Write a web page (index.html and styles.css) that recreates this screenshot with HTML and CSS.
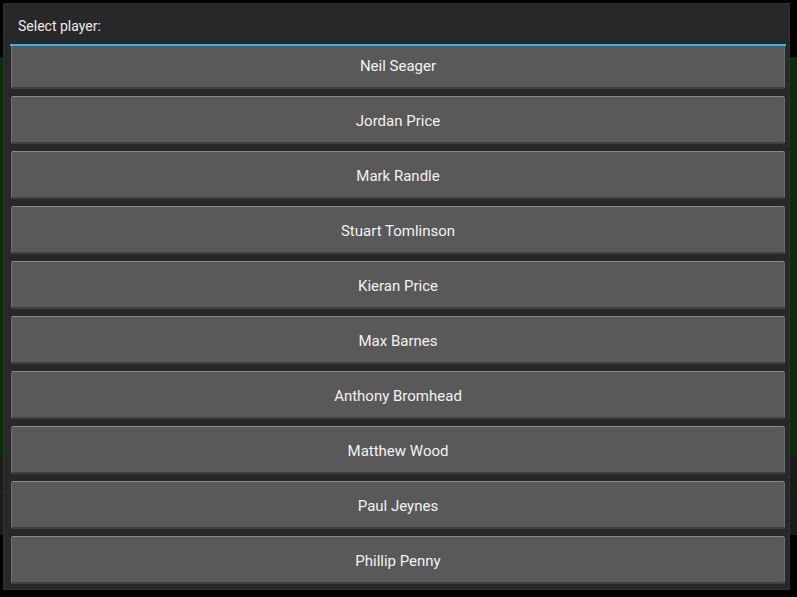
FILE: index.html
```html
<!DOCTYPE html>
<html>
<head>
<meta charset="utf-8">
<link rel="stylesheet" href="styles.css">
</head>
<body>
<div class="dialog">
  <div class="title">Select player:</div>
  <div class="rule"></div>
  <div class="list">
    <div class="items">
      <div class="btn">Neil Seager</div>
      <div class="btn">Jordan Price</div>
      <div class="btn">Mark Randle</div>
      <div class="btn">Stuart Tomlinson</div>
      <div class="btn">Kieran Price</div>
      <div class="btn">Max Barnes</div>
      <div class="btn">Anthony Bromhead</div>
      <div class="btn">Matthew Wood</div>
      <div class="btn">Paul Jeynes</div>
      <div class="btn">Phillip Penny</div>
    </div>
  </div>
</div>
</body>
</html>
```
FILE: styles.css
```css
* { box-sizing: border-box; }
html, body { margin: 0; }
body {
  width: 797px;
  height: 597px;
  padding: 3px 7px 7px 3px;
  overflow: hidden;
  font-family: Roboto, "Noto Sans", sans-serif;
  background: linear-gradient(to bottom,
    #000 0, #000 57px,
    #0b2d0b 57px, #0b2d0b 455px,
    #1b1b1b 455px, #1b1b1b 491px,
    #0b2d0b 491px, #0b2d0b 493px,
    #1b1b1b 493px, #1b1b1b 535px,
    #000 535px, #000 100%);
}
.dialog {
  width: 787px;
  height: 587px;
  background: #282828;
  border: 1px solid #303030;
  padding: 0 3px 0 6px;
  display: flex;
  flex-direction: column;
}
.title {
  height: 40px;
  flex: none;
  display: flex;
  align-items: center;
  padding: 4px 0 0 8px;
  font-size: 14px;
  color: #ececec;
}
.rule {
  height: 2px;
  flex: none;
  background: #33b5e5;
}
.list {
  flex: 1;
  overflow: hidden;
  padding: 0 1px;
}
.items {
  margin-top: -5px;
  display: flex;
  flex-direction: column;
  gap: 7px;
}
.btn {
  height: 48px;
  flex: none;
  display: flex;
  align-items: center;
  justify-content: center;
  padding-top: 2px;
  background: #595959;
  border-top: 1px solid #8a8a8a;
  border-left: 1px solid #6e6e6e;
  border-right: 1px solid #6a6a6a;
  border-bottom: 2px solid #404040;
  border-radius: 2px;
  color: #f2f2f2;
  font-size: 15px;
}
```
